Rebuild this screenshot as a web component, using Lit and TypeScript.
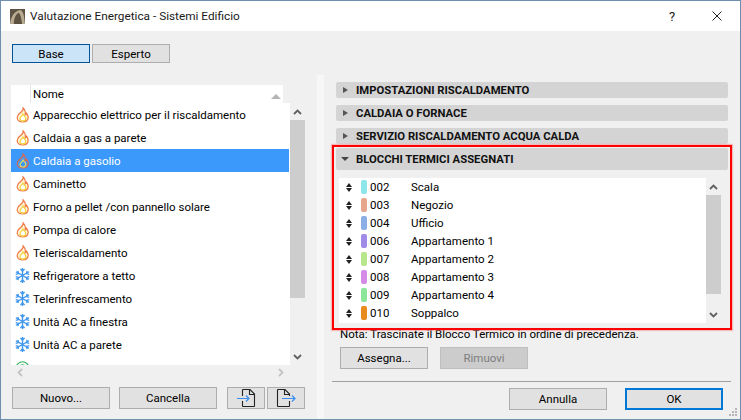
import { LitElement, html, css, svg } from "lit";
import { customElement } from "lit/decorators.js";

const flame = svg`<svg class="ic" width="14" height="16" viewBox="0 0 16 18"><path d="M8.200 1C9 4 5.800 5.400 3.600 7.600 1.400 10 1 11.600 1.600 13.400 2.400 15.800 4.800 17 7.600 17c3.400 0 6-2 6.300-5 .2-2.200-1-3.800-2-5-.3 1-.8 1.700-1.500 2C11 6.500 10.200 3 8.200 1Z" fill="#fff6d8" stroke="#ef7a45" stroke-width="1.400"/><path d="M8 8C7.800 9.500 4.800 10.800 4.600 13c0 1.800 1.500 2.800 3.200 2.800 2 0 3.400-1.200 3.400-2.900 0-1.900-2-3-3.200-4.900Z" fill="#fff" stroke="#f4d23c" stroke-width="1.400"/></svg>`;
const flameSel = svg`<svg class="ic" width="14" height="16" viewBox="0 0 16 18"><path d="M8.200 1C9 4 5.800 5.400 3.600 7.600 1.400 10 1 11.600 1.600 13.400 2.400 15.800 4.800 17 7.600 17c3.400 0 6-2 6.300-5 .2-2.200-1-3.800-2-5-.3 1-.8 1.700-1.500 2C11 6.500 10.200 3 8.200 1Z" fill="#3b99fc" stroke="#d9694f" stroke-width="1.400"/><path d="M8 8C7.800 9.500 4.800 10.800 4.600 13c0 1.800 1.500 2.800 3.200 2.800 2 0 3.400-1.200 3.400-2.900 0-1.900-2-3-3.200-4.900Z" fill="#3b99fc" stroke="#e8dc5a" stroke-width="1.300"/></svg>`;
const snow = svg`<svg class="ic" width="15" height="15" viewBox="0 0 16 16" fill="none" stroke="#3f96ec" stroke-width="1.500"><path d="M8 0v16M1 4l14 8M15 4 1 12"/><path d="M5.800 1 8 3.200 10.200 1M5.800 15 8 12.800l2.200 2.200M.8 6.800 3.800 6 3 3M15.200 9.200 12.200 10l.8 3M15.200 6.800 12.200 6l.8-3M.8 9.200 3.800 10 3 13"/></svg>`;
const green = svg`<svg class="ic" width="15" height="16" viewBox="0 0 16 18" fill="none" stroke="#2fb35c" stroke-width="1.300"><circle cx="8" cy="9" r="7"/><circle cx="8" cy="9" r="3.500"/></svg>`;

const up = html`<svg width="9" height="6" viewBox="0 0 9 6" fill="none" stroke="#606060" stroke-width="1.800"><path d="M1 5 4.500 1.500 8 5"/></svg>`;
const down = html`<svg width="9" height="6" viewBox="0 0 9 6" fill="none" stroke="#606060" stroke-width="1.800"><path d="M1 1 4.500 4.500 8 1"/></svg>`;
const left = html`<svg width="6" height="9" viewBox="0 0 6 9" fill="none" stroke="#c4c4c4" stroke-width="1.800"><path d="M5 1 1.500 4.500 5 8"/></svg>`;
const right = html`<svg width="6" height="9" viewBox="0 0 6 9" fill="none" stroke="#c4c4c4" stroke-width="1.800"><path d="M1 1 4.500 4.500 1 8"/></svg>`;

const systems: [string, unknown][] = [
  ["Apparecchio elettrico per il riscaldamento", flame],
  ["Caldaia a gas a parete", flame],
  ["Caldaia a gasolio", flameSel],
  ["Caminetto", flame],
  ["Forno a pellet /con pannello solare", flame],
  ["Pompa di calore", flame],
  ["Teleriscaldamento", flame],
  ["Refrigeratore a tetto", snow],
  ["Telerinfrescamento", snow],
  ["Unità AC a finestra", snow],
  ["Unità AC a parete", snow],
  ["", green],
];

const blocks = [
  ["002", "Scala", "#8ce6ea"],
  ["003", "Negozio", "#e6a78c"],
  ["004", "Ufficio", "#8caee6"],
  ["006", "Appartamento 1", "#a08ce6"],
  ["007", "Appartamento 2", "#b8e68c"],
  ["008", "Appartamento 3", "#d48ce6"],
  ["009", "Appartamento 4", "#8ce69a"],
  ["010", "Soppalco", "#e88c1e"],
];

@customElement("app-root")
export class AppRoot extends LitElement {
  static styles = css`
    :host { display: block; width: 741px; height: 420px; font-family: Roboto, "Noto Sans", sans-serif; font-size: 11.500px; color: #000; }
    * { box-sizing: border-box; }
    .win { position: relative; width: 741px; height: 420px; border: 1px solid #6f8fae; background: #f0f0f0; display: flex; flex-direction: column; overflow: hidden; }
    .title { height: 30px; flex: none; background: #fff; display: flex; align-items: center; padding-left: 9px; font-size: 11.800px; color: #1a1a1a; }
    .logo { width: 15px; height: 15px; margin-right: 5px; }
    .title .name { flex: 1; }
    .help { width: 20px; text-align: center; font-size: 13px; margin-right: 30px; }
    .close { margin-right: 18px; display: block; }
    .body { flex: 1; display: flex; min-height: 0; }
    .left { width: 316px; flex: none; padding: 13px 0 0 10px; display: flex; flex-direction: column; }
    .btn { height: 22px; border: 1px solid #adadad; background: #e1e1e1; display: flex; align-items: center; justify-content: center; padding: 0; }
    .tabs { display: flex; gap: 2px; margin-left: 1px; }
    .tabs .btn { width: 78px; height: 19px; }
    .tabs .on { background: #cce4f7; border-color: #005499; }
    .listwrap { margin-top: 22px; width: 294px; }
    .head { width: 272px; height: 18px; background: #fff; display: flex; align-items: center; position: relative; }
    .head .col { margin-left: 19px; border-left: 1px solid #e5e5e5; height: 18px; padding-left: 2px; display: flex; align-items: center; }
    .sort { position: absolute; right: 2px; top: 9px; width: 0; height: 0; border: 5px solid transparent; border-top: 0; border-bottom: 5px solid #b4b4b4; }
    .lbody { display: flex; height: 262px; }
    .items { width: 279px; height: 262px; background: #fff; overflow: hidden; }
    .item { height: 23px; display: flex; align-items: center; width: 278px; white-space: nowrap; }
    .item.sel { background: #3b99fc; color: #fff; }
    .ic { flex: none; }
    .icbox { width: 22px; display: flex; justify-content: center; padding-left: 1px; }
    .sb { width: 15px; display: flex; flex-direction: column; align-items: center; position: relative; }
    .sb .thumb { width: 15px; background: #cdcdcd; }
    .sb .arr { height: 17px; display: flex; align-items: center; justify-content: center; }
    .sb .fill { flex: 1; }
    .hsb { height: 15px; width: 279px; display: flex; justify-content: space-between; align-items: center; padding: 0 6px; }
    .actions { display: flex; margin: 7px 0 0 1px; }
    .actions .wide { width: 98px; margin-right: 9px; }
    .actions .ico { width: 38px; margin-right: 2px; }
    .actions .wide + .ico { margin-left: 1px; }
    .gutter { width: 7px; flex: none; margin-top: 44px; background: #f7f7f7; }
    .right { flex: 1; padding: 51px 0 0 12px; display: flex; flex-direction: column; position: relative; }
    .bar { width: 392px; height: 16px; background: #d4d4d4; border-radius: 2px; display: flex; align-items: center; font-weight: 700; font-size: 11.300px; margin-bottom: 7px; color: #111; }
    .bar .tri { width: 20px; display: flex; justify-content: center; padding-right: 2px; }
    .tr { width: 0; height: 0; border: 3.500px solid transparent; border-left: 5px solid #555; border-right: 0; }
    .td { width: 0; height: 0; border: 4px solid transparent; border-top: 4px solid #444; border-bottom: 0; }
    .bar.open { height: 22px; margin: -3px 0 8px; }
    .blist { display: flex; margin-left: 3px; height: 145px; }
    .brows { width: 367px; background: #fff; }
    .brow { height: 18px; display: flex; align-items: center; white-space: nowrap; }
    .updown { width: 6px; margin-left: 7px; margin-right: 9px; display: flex; flex-direction: column; gap: 1px; }
    .updown i { display: block; width: 0; height: 0; border: 3px solid transparent; }
    .updown i:first-child { border-top: 0; border-bottom: 4px solid #222; }
    .updown i:last-child { border-bottom: 0; border-top: 4px solid #222; }
    .swatch { width: 6px; height: 14px; border-radius: 2px; margin-right: 3px; flex: none; }
    .code { width: 41px; }
    .note { margin: 4px 0 0 4px; height: 14px; line-height: 14px; white-space: nowrap; }
    .pair { display: flex; gap: 12px; margin: 6px 0 0 4px; }
    .pair .btn { width: 88px; }
    .pair .dis { background: #cccccc; border-color: #bfbfbf; color: #7e7e7e; }
    .sep { height: 1px; background: #a0a0a0; width: 399px; margin: 12px 0 0 -4px; }
    .foot { display: flex; margin: 6px 0 0 173px; gap: 18px; }
    .foot .btn { width: 98px; }
    .foot .def { border: 2px solid #0078d7; }
    .red { position: absolute; left: 8px; top: 114px; width: 400px; height: 185px; border: 2px solid #f00; box-shadow: 0 0 1px 1px rgba(255, 120, 120, .45); pointer-events: none; }
    .grip { position: absolute; right: 2px; bottom: 2px; }
  `;

  render() {
    return html`<div class="win">
      <div class="title">
        <svg class="logo" viewBox="0 0 16 16"><rect width="16" height="16" fill="#5e5343"/><path d="M0 16C1 7 5 2 11 1c3 1 4 5 5 15h-3C12 9 11 5 9 4 6 6 4 10 4 16Z" fill="#b7ab90"/></svg>
        <span class="name">Valutazione Energetica - Sistemi Edificio</span>
        <span class="help">?</span>
        <svg class="close" width="10" height="10" viewBox="0 0 10 10" stroke="#222" fill="none"><path d="M.5.5l9 9M9.500.5l-9 9"/></svg>
      </div>
      <div class="body">
        <div class="left">
          <div class="tabs"><div class="btn on">Base</div><div class="btn">Esperto</div></div>
          <div class="listwrap">
            <div class="head"><div class="col">Nome</div><i class="sort"></i></div>
            <div class="lbody">
              <div class="items">
                ${systems.map(([n, ic], i) => html`<div class="item ${i === 2 ? "sel" : ""}"><span class="icbox">${ic}</span><span>${n}</span></div>`)}
              </div>
              <div class="sb">
                <div class="arr">${up}</div>
                <div class="thumb" style="height:178px"></div>
                <div class="fill"></div>
                <div class="arr">${down}</div>
              </div>
            </div>
            <div class="hsb">${left}${right}</div>
          </div>
          <div class="actions">
            <div class="btn wide">Nuovo...</div>
            <div class="btn wide">Cancella</div>
            <div class="btn ico">
              <svg width="22" height="20" viewBox="0 0 22 20" fill="none"><path d="M7.500 8V2a.5.5 0 0 1 .5-.5h7l4.500 4.500v12a.5.5 0 0 1-.5.5h-11a.5.5 0 0 1-.5-.5V13M14.500 1.500v5h5" stroke="#222" stroke-width="1.100"/><path d="M2 10.500h12M11 7.500l3 3-3 3" stroke="#3a8ef0" stroke-width="1.200"/></svg>
            </div>
            <div class="btn ico">
              <svg width="22" height="20" viewBox="0 0 22 20" fill="none"><path d="M2.500 18V2a.5.5 0 0 1 .5-.5h7l4.500 4.500v2M14.500 13v5a.5.5 0 0 1-.5.5H3a.5.5 0 0 1-.5-.5M9.500 1.500v5h5" stroke="#222" stroke-width="1.100"/><path d="M7 10.500h13M17 7.500l3 3-3 3" stroke="#3a8ef0" stroke-width="1.200"/></svg>
            </div>
          </div>
        </div>
        <div class="gutter"></div>
        <div class="right">
          <div class="bar"><span class="tri"><i class="tr"></i></span>IMPOSTAZIONI RISCALDAMENTO</div>
          <div class="bar"><span class="tri"><i class="tr"></i></span>CALDAIA O FORNACE</div>
          <div class="bar"><span class="tri"><i class="tr"></i></span>SERVIZIO RISCALDAMENTO ACQUA CALDA</div>
          <div class="bar open"><span class="tri"><i class="td"></i></span>BLOCCHI TERMICI ASSEGNATI</div>
          <div class="blist">
            <div class="brows">
              ${blocks.map(([c, n, col]) => html`<div class="brow"><span class="updown"><i></i><i></i></span><span class="swatch" style="background:${col}"></span><span class="code">${c}</span><span>${n}</span></div>`)}
            </div>
            <div class="sb">
              <div class="arr">${up}</div>
              <div class="thumb" style="height:99px"></div>
              <div class="fill"></div>
              <div class="arr">${down}</div>
            </div>
          </div>
          <div class="note">Nota: Trascinate il Blocco Termico in ordine di precedenza.</div>
          <div class="pair"><div class="btn">Assegna...</div><div class="btn dis">Rimuovi</div></div>
          <div class="sep"></div>
          <div class="foot"><div class="btn">Annulla</div><div class="btn def">OK</div></div>
          <div class="red"></div>
        </div>
      </div>
      <svg class="grip" width="9" height="9" viewBox="0 0 9 9" fill="#b5b5b5"><rect x="6" y="0" width="2" height="2"/><rect x="3" y="3" width="2" height="2"/><rect x="6" y="3" width="2" height="2"/><rect x="0" y="6" width="2" height="2"/><rect x="3" y="6" width="2" height="2"/><rect x="6" y="6" width="2" height="2"/></svg>
    </div>`;
  }
}
